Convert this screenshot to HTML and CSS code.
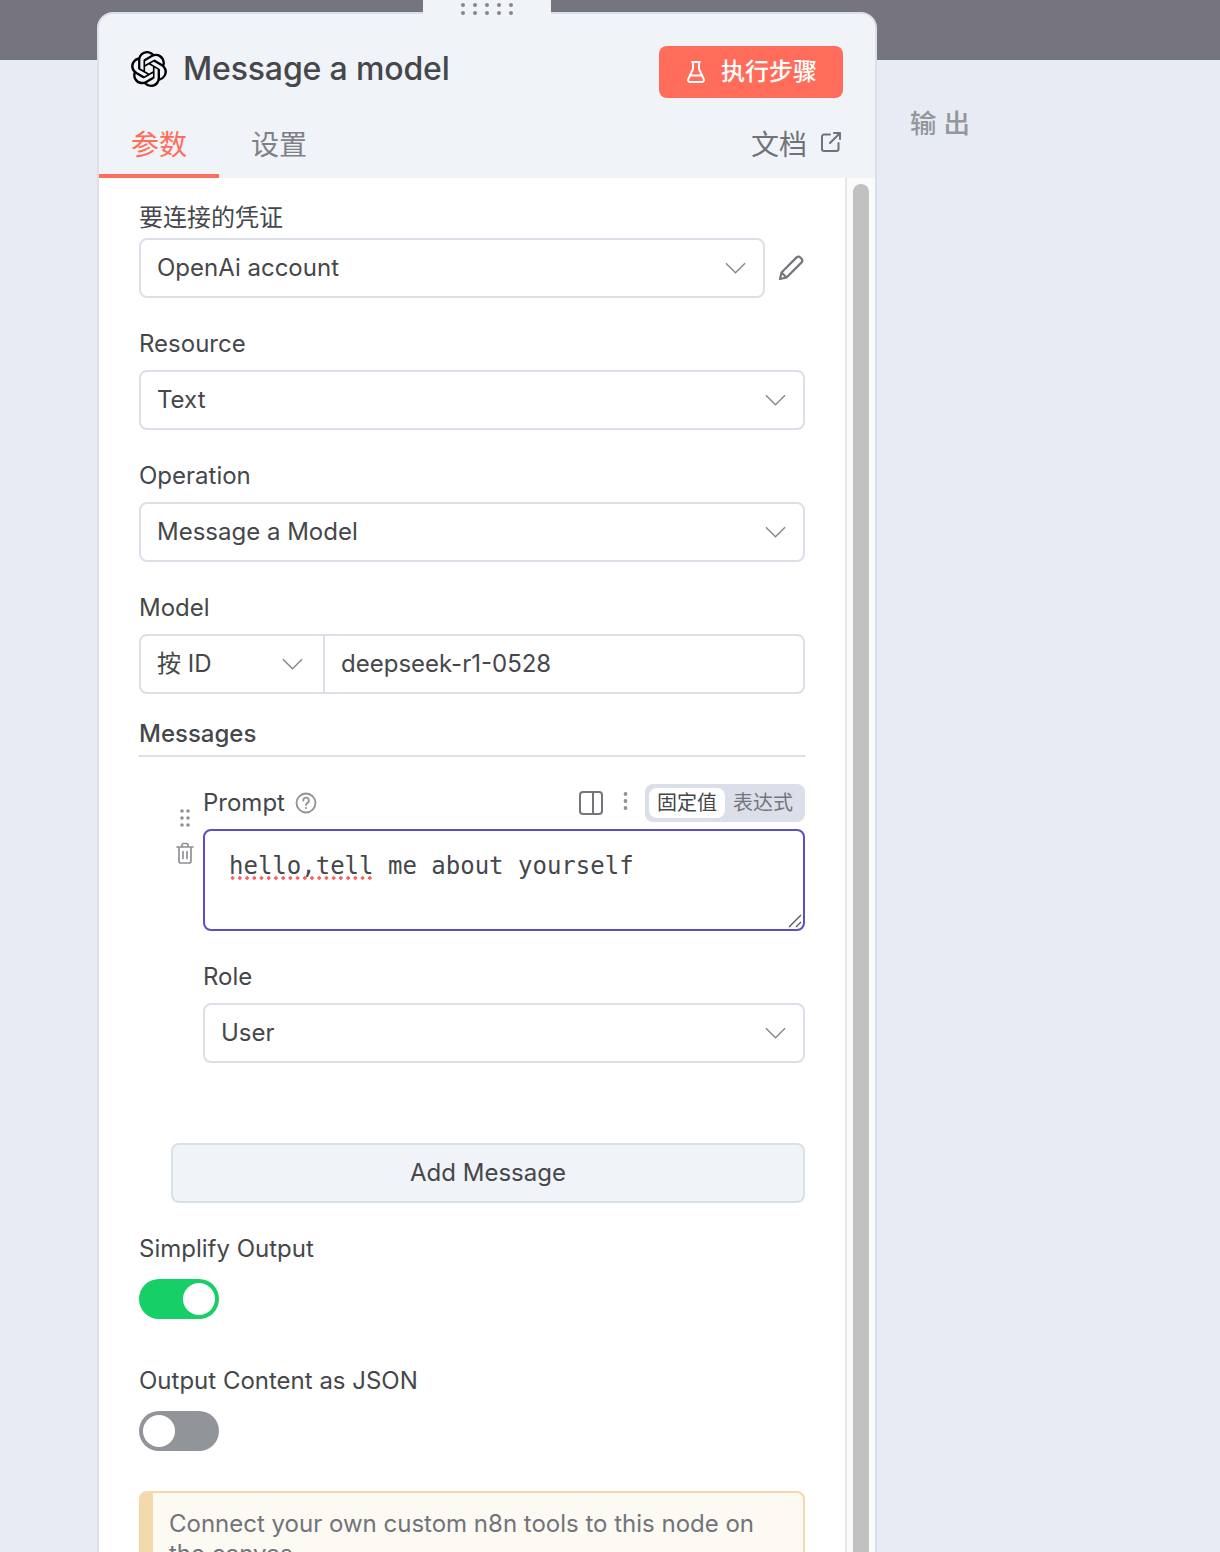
FILE: index.html
```html
<!DOCTYPE html>
<html lang="zh">
<head>
<meta charset="utf-8">
<title>Message a model</title>
<link rel="stylesheet" href="styles.css">
</head>
<body>
<div class="page">
  <div class="topbar"></div>
  <div class="output-title">输 出</div>

  <div class="handle">
    <div class="dots"><i></i><i></i><i></i><i></i><i></i><i></i><i></i><i></i><i></i><i></i></div>
  </div>

  <section class="panel">
    <header class="head">
      <div class="head-row">
        <div class="title-wrap">
          <svg class="logo" viewBox="0 0 24 24"><path d="M22.2819 9.8211a5.9847 5.9847 0 0 0-.5157-4.9108 6.0462 6.0462 0 0 0-6.5098-2.9A6.0651 6.0651 0 0 0 4.9807 4.1818a5.9847 5.9847 0 0 0-3.9977 2.9 6.0462 6.0462 0 0 0 .7427 7.0966 5.98 5.98 0 0 0 .511 4.9107 6.051 6.051 0 0 0 6.5146 2.9001A5.9847 5.9847 0 0 0 13.2599 24a6.0557 6.0557 0 0 0 5.7718-4.2058 5.9894 5.9894 0 0 0 3.9977-2.9001 6.0557 6.0557 0 0 0-.7475-7.0729zm-9.022 12.6081a4.4755 4.4755 0 0 1-2.8764-1.0408l.1419-.0804 4.7783-2.7582a.7948.7948 0 0 0 .3927-.6813v-6.7369l2.02 1.1686a.071.071 0 0 1 .038.052v5.5826a4.504 4.504 0 0 1-4.4945 4.4944zm-9.6607-4.1254a4.4708 4.4708 0 0 1-.5346-3.0137l.142.0852 4.783 2.7582a.7712.7712 0 0 0 .7806 0l5.8428-3.3685v2.3324a.0804.0804 0 0 1-.0332.0615L9.74 19.9502a4.4992 4.4992 0 0 1-6.1408-1.6464zM2.3408 7.8956a4.485 4.485 0 0 1 2.3655-1.9728V11.6a.7664.7664 0 0 0 .3879.6765l5.8144 3.3543-2.0201 1.1685a.0757.0757 0 0 1-.071 0l-4.8303-2.7865A4.504 4.504 0 0 1 2.3408 7.872zm16.5963 3.8558L13.1038 8.364 15.1192 7.2a.0757.0757 0 0 1 .071 0l4.8303 2.7913a4.4944 4.4944 0 0 1-.6765 8.1042v-5.6772a.79.79 0 0 0-.407-.667zm2.0107-3.0231l-.142-.0852-4.7735-2.7818a.7759.7759 0 0 0-.7854 0L9.409 9.2297V6.8974a.0662.0662 0 0 1 .0284-.0615l4.8303-2.7866a4.4992 4.4992 0 0 1 6.6802 4.66zM8.3065 12.863l-2.02-1.1638a.0804.0804 0 0 1-.038-.0567V6.0742a4.4992 4.4992 0 0 1 7.3757-3.4537l-.142.0805L8.704 5.459a.7948.7948 0 0 0-.3927.6813zm1.0976-2.3654l2.602-1.4998 2.6069 1.4998v2.9994l-2.5974 1.4997-2.6067-1.4997Z"/></svg>
          <h1 class="title">Message a model</h1>
        </div>
        <button class="run">
          <svg class="flask" viewBox="0 0 18 22"><path d="M5 1h8M6 1v7L1.300 18A2 2 0 0 0 3 21h12a2 2 0 0 0 1.700-3L12 8V1M3.500 14.500h11"/></svg>
          <span>执行步骤</span>
        </button>
      </div>
      <nav class="tabs">
        <a class="tab active">参数</a>
        <a class="tab">设置</a>
        <a class="docs">文档
          <svg class="ext" viewBox="0 0 20 20"><path d="M9 2.500H3a2 2 0 0 0-2 2V17a2 2 0 0 0 2 2h12.500a2 2 0 0 0 2-2v-6M9 11 19 1M13 1h6v6"/></svg>
        </a>
      </nav>
    </header>

    <div class="body">
      <div class="form">
        <div class="field first">
          <label class="label">要连接的凭证</label>
          <div class="cred-row">
            <div class="select">OpenAi account<svg class="chev" viewBox="0 0 22 12"><path d="M1 1l10 10L21 1"/></svg></div>
            <svg class="pencil" viewBox="0 0 28 28"><path d="M3 25l1.500-6.500L19.600 3.400a2.600 2.600 0 0 1 3.700 0l1.300 1.300a2.600 2.600 0 0 1 0 3.700L9.500 23.500zM4.500 18.500l5 5"/></svg>
          </div>
        </div>
        <div class="field">
          <label class="label">Resource</label>
          <div class="select">Text<svg class="chev" viewBox="0 0 22 12"><path d="M1 1l10 10L21 1"/></svg></div>
        </div>
        <div class="field">
          <label class="label">Operation</label>
          <div class="select">Message a Model<svg class="chev" viewBox="0 0 22 12"><path d="M1 1l10 10L21 1"/></svg></div>
        </div>
        <div class="field">
          <label class="label">Model</label>
          <div class="combo">
            <div class="combo-mode">按 ID<svg class="chev" viewBox="0 0 22 12"><path d="M1 1l10 10L21 1"/></svg></div>
            <div class="combo-value">deepseek-r1-0528</div>
          </div>
        </div>

        <div class="section-title">Messages</div>

        <div class="message">
          <div class="side-tools">
            <svg class="grip" viewBox="0 0 10 18"><circle cx="2" cy="2" r="1.800"/><circle cx="8" cy="2" r="1.800"/><circle cx="2" cy="9" r="1.800"/><circle cx="8" cy="9" r="1.800"/><circle cx="2" cy="16" r="1.800"/><circle cx="8" cy="16" r="1.800"/></svg>
            <svg class="trash" viewBox="0 0 18 22"><path d="M1 5h16M6 5V3a1.500 1.500 0 0 1 1.500-1.500h3A1.500 1.500 0 0 1 12 3v2M3 5v14a2 2 0 0 0 2 2h8a2 2 0 0 0 2-2V5M7 9.500v7M11 9.500v7"/></svg>
          </div>
          <div class="message-main">
            <div class="prompt-bar">
              <div class="prompt-label">Prompt
                <svg class="help" viewBox="0 0 22 22"><circle cx="11" cy="11" r="9.500"/><path d="M8.300 8.500a2.800 2.800 0 1 1 4.200 2.400c-.9.500-1.500 1-1.500 2"/><circle class="help-dot" cx="11" cy="16" r="1"/></svg>
              </div>
              <div class="prompt-tools">
                <svg class="split" viewBox="0 0 24 24"><rect x="1" y="1" width="22" height="22" rx="3"/><path d="M14 1v22"/></svg>
                <svg class="kebab" viewBox="0 0 4 18"><circle cx="2" cy="2" r="1.900"/><circle cx="2" cy="9" r="1.900"/><circle cx="2" cy="16" r="1.900"/></svg>
                <div class="mode-switch"><span class="mode on">固定值</span><span class="mode">表达式</span></div>
              </div>
            </div>
            <div class="textarea"><span class="typo">hello,tell</span> me about yourself
              <svg class="grabber" viewBox="0 0 14 14"><path d="M1 13 13 1M8 13l5-5"/></svg>
            </div>
            <div class="field role">
              <label class="label">Role</label>
              <div class="select">User<svg class="chev" viewBox="0 0 22 12"><path d="M1 1l10 10L21 1"/></svg></div>
            </div>
          </div>
        </div>

        <button class="add">Add Message</button>

        <div class="field toggle-field">
          <label class="label">Simplify Output</label>
          <div class="toggle on"><span class="knob"></span></div>
        </div>
        <div class="field toggle-field second">
          <label class="label">Output Content as JSON</label>
          <div class="toggle"><span class="knob"></span></div>
        </div>

        <div class="notice">Connect your own custom n8n tools to this node on the canvas</div>
      </div>
      <div class="scrolltrack"><div class="thumb"></div></div>
    </div>
  </section>
</div>
</body>
</html>
```

FILE: styles.css
```css
* { box-sizing: border-box; }
html, body { margin: 0; padding: 0; }
body {
  font-family: Inter, "Noto Sans CJK SC", sans-serif;
  color: #45474b;
  background: #e7ebf4;
}
.page { position: relative; height: 1552px; overflow: hidden; background: #e7ebf4; }
.topbar { height: 60px; background: #76757f; }
.output-title {
  margin: 46px 0 0 910px;
  font-size: 26.500px;
  line-height: 34px;
  font-weight: 500;
  color: #93969b;
}
.handle {
  position: absolute; left: 423px; top: 0;
  width: 128px; height: 16px;
  background: #f0f3f8;
  z-index: 2;
  display: flex; justify-content: center;
}
.dots {
  margin-top: 3px;
  display: grid;
  grid-template-columns: repeat(5, 4px);
  grid-auto-rows: 4px;
  column-gap: 8px; row-gap: 4px;
}
.dots i { width: 4px; height: 4px; border-radius: 50%; background: #85878c; }

.panel {
  position: absolute; left: 97px; top: 12px;
  width: 780px; height: 1560px;
  background: #f0f3f8;
  border: 2px solid #dbdfe7;
  border-radius: 16px 16px 0 0;
  overflow: hidden;
}
.head { height: 164px; position: relative; }
.head-row {
  display: flex; justify-content: space-between; align-items: flex-start;
  padding: 32px 32px 0 32px;
}
.title-wrap { display: flex; align-items: center; height: 46px; }
.logo { width: 36px; height: 36px; fill: #000; }
.title {
  margin: 0 0 0 16px;
  font-size: 32px; line-height: 46px; font-weight: 500; color: #45474b;
  letter-spacing: -0.15px;
}
.run {
  width: 184px; height: 52px;
  border: 0; border-radius: 8px;
  background: #ff6d5a; color: #fff;
  font: 500 24px/52px Inter, "Noto Sans CJK SC", sans-serif;
  display: flex; align-items: center; justify-content: center; gap: 16px;
  padding: 0 0 0 2px;
}
.flask { width: 18px; height: 22px; fill: none; stroke: #fff; stroke-width: 2; stroke-linecap: round; stroke-linejoin: round; }
.tabs {
  position: absolute; left: 0; right: 0; bottom: 0; height: 64px;
  display: flex;
}
.tab {
  width: 120px; text-align: center;
  font-size: 28px; line-height: 62px; font-weight: 400;
  color: #7e8186;
  border-bottom: 4px solid transparent;
  height: 64px;
}
.tab.active { color: #ff6d5a; border-bottom-color: #ff6d5a; }
.docs {
  margin-left: auto; padding-right: 34px;
  font-size: 28px; line-height: 62px; font-weight: 400; color: #6f7278;
  display: flex; align-items: flex-start; gap: 14px;
}
.ext { width: 20px; height: 20px; margin-top: 18px; fill: none; stroke: #6f7278; stroke-width: 2; stroke-linecap: round; stroke-linejoin: round; }

.body { display: flex; background: #fff; height: 1400px; }
.form { width: 746px; padding: 25px 40px 0 40px; flex: none; }
.scrolltrack {
  flex: 1;
  background: #fafafa;
  border-left: 2px solid #e8e8e8;
  padding: 6px 6px 0 6px;
}
.thumb { width: 16px; height: 1500px; background: #c1c1c1; border-radius: 8px; }

.field { margin-top: 31px; }
.field.first { margin-top: 0; }
.label { display: block; font-size: 24px; line-height: 30px; height: 41px; color: #45474b; }
.first .label { height: 35px; }
.select {
  height: 60px;
  border: 2px solid #dbdfe7; border-radius: 8px;
  background: #fff;
  padding: 0 17px 0 16px;
  font-size: 24px; line-height: 56px; color: #45474b;
  display: flex; justify-content: space-between; align-items: center;
}
.chev { width: 21px; height: 12px; fill: none; stroke: #85878c; stroke-width: 1.500; flex: none; }
.cred-row { display: flex; align-items: center; gap: 12px; }
.cred-row .select { flex: 1; }
.pencil { width: 28px; height: 28px; fill: none; stroke: #74767c; stroke-width: 2.200; stroke-linejoin: round; flex: none; }
.combo {
  height: 60px; display: flex;
  border: 2px solid #dbdfe7; border-radius: 8px;
  font-size: 24px; line-height: 56px;
}
.combo-mode {
  width: 184px; padding: 0 20px 0 16px;
  border-right: 2px solid #dbdfe7;
  display: flex; justify-content: space-between; align-items: center;
}
.combo-value { padding-left: 16px; flex: 1; }
.section-title {
  margin-top: 25px;
  height: 38px;
  font-size: 24px; line-height: 30px; font-weight: 500;
  border-bottom: 2px solid #dbdfe7;
}
.message { display: flex; margin-top: 27px; }
.side-tools {
  width: 64px; flex: none;
  display: flex; flex-direction: column; align-items: flex-start;
  padding: 25px 0 0 36px;
}
.grip { width: 10px; height: 18px; fill: #8f9196; margin-left: 5px; }
.trash { width: 18px; height: 22px; margin-top: 15px; margin-left: 1px; fill: none; stroke: #8f9196; stroke-width: 1.700; stroke-linecap: round; stroke-linejoin: round; }
.message-main { flex: 1; min-width: 0; }
.prompt-bar {
  height: 38px; margin-bottom: 7px;
  display: flex; justify-content: space-between; align-items: center;
}
.prompt-label { font-size: 24px; line-height: 38px; display: flex; align-items: center; gap: 10px; }
.help { width: 22px; height: 22px; fill: none; stroke: #8f9196; stroke-width: 1.800; stroke-linecap: round; }
.help-dot { fill: #8f9196; stroke: none; }
.prompt-tools { display: flex; align-items: center; }
.split { width: 24px; height: 24px; fill: none; stroke: #74767c; stroke-width: 2; }
.kebab { width: 5px; height: 18px; fill: #8f9196; margin: -4px 17px 0 20px; }
.mode-switch {
  height: 38px; padding: 4px;
  background: #dbdfe9; border-radius: 8px;
  display: flex;
}
.mode {
  width: 76px; font-size: 20px; line-height: 30px; text-align: center;
  color: #74767c; border-radius: 8px;
}
.mode.on { background: #fff; color: #45474b; }
.textarea {
  position: relative;
  height: 102px;
  border: 2px solid #5b4fc4; border-radius: 8px;
  padding: 18px 24px;
  font-family: "DejaVu Sans Mono", monospace;
  font-size: 24px; line-height: 34px;
  color: #45474b; white-space: pre-wrap; background: #fff;
}
.typo {
  background: radial-gradient(circle, #ff5f5f 1.500px, transparent 2px) 0 100% / 7.230px 4px repeat-x;
}
.grabber { position: absolute; right: 1px; bottom: 1px; width: 14px; height: 14px; fill: none; stroke: #555; stroke-width: 1.300; }
.field.role { margin-top: 31px; }
.add {
  display: block;
  margin: 80px 0 0 32px;
  width: 634px; height: 60px;
  border: 2px solid #dbdfe7; border-radius: 8px;
  background: #f0f3f8; color: #45474b;
  font: 400 24px/56px Inter, "Noto Sans CJK SC", sans-serif;
  padding: 0;
}
.toggle-field { margin-top: 31px; }
.toggle-field .label { height: 45px; }
.toggle-field.second { margin-top: 47px; }
.toggle {
  width: 80px; height: 40px; border-radius: 20px;
  background: #919498; padding: 4px;
  display: flex;
}
.toggle.on { background: #16cf66; justify-content: flex-end; }
.knob { width: 32px; height: 32px; border-radius: 50%; background: #fff; }
.notice {
  margin-top: 40px;
  border: 2px solid #f3d9ac; border-left-width: 14px;
  border-radius: 8px;
  background: #fdf9f3;
  padding: 16px 16px;
  font-size: 24px; line-height: 30px; color: #71747a;
}
```
